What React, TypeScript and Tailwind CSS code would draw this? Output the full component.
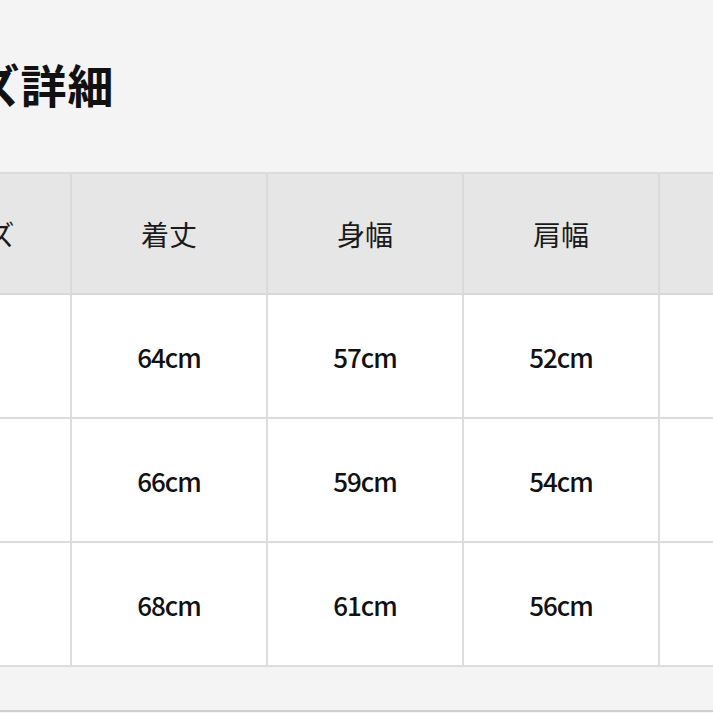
const headers = ['サイズ', '着丈', '身幅', '肩幅', '袖丈'];

const rows = [
  ['S', '64cm', '57cm', '52cm', '60cm'],
  ['M', '66cm', '59cm', '54cm', '61cm'],
  ['L', '68cm', '61cm', '56cm', '62cm'],
];

const font = { fontFamily: '"Noto Sans CJK JP", "Noto Sans", sans-serif' };

export default function App() {
  return (
    <div className="w-[713px] h-[713px] overflow-hidden bg-[#f4f4f4]" style={font}>
      <div className="ml-[-124px] w-[1000px]">
        {/* Title */}
        <div className="h-[172px] flex items-center pl-[5px] pb-[6px]">
          <h2 className="text-[46px] font-bold text-[#111] tracking-[1px]">サイズ詳細</h2>
        </div>

        {/* Size table */}
        <div className="border-t-2 border-[#dcdcdc]">
          <div className="flex bg-[#e6e6e6] h-[121px] border-b-2 border-[#d8d8d8]">
            {headers.map((h) => (
              <div
                key={h}
                className="w-[196px] shrink-0 border-r-2 border-[#dadada] flex items-center justify-center text-[28px] text-[#1a1a1a]"
              >
                {h}
              </div>
            ))}
          </div>
          {rows.map((row, i) => (
            <div key={i} className="flex bg-white h-[124px] border-b-2 border-[#dcdcdc]">
              {row.map((cell, j) => (
                <div
                  key={j}
                  className="w-[196px] shrink-0 border-r-2 border-[#dcdcdc] flex items-center justify-center text-[26px] font-medium text-[#111] tracking-[-1px]"
                >
                  {cell}
                </div>
              ))}
            </div>
          ))}
        </div>

        <div className="h-[45px] border-b-2 border-[#cfcfcf]" />
      </div>
    </div>
  );
}
